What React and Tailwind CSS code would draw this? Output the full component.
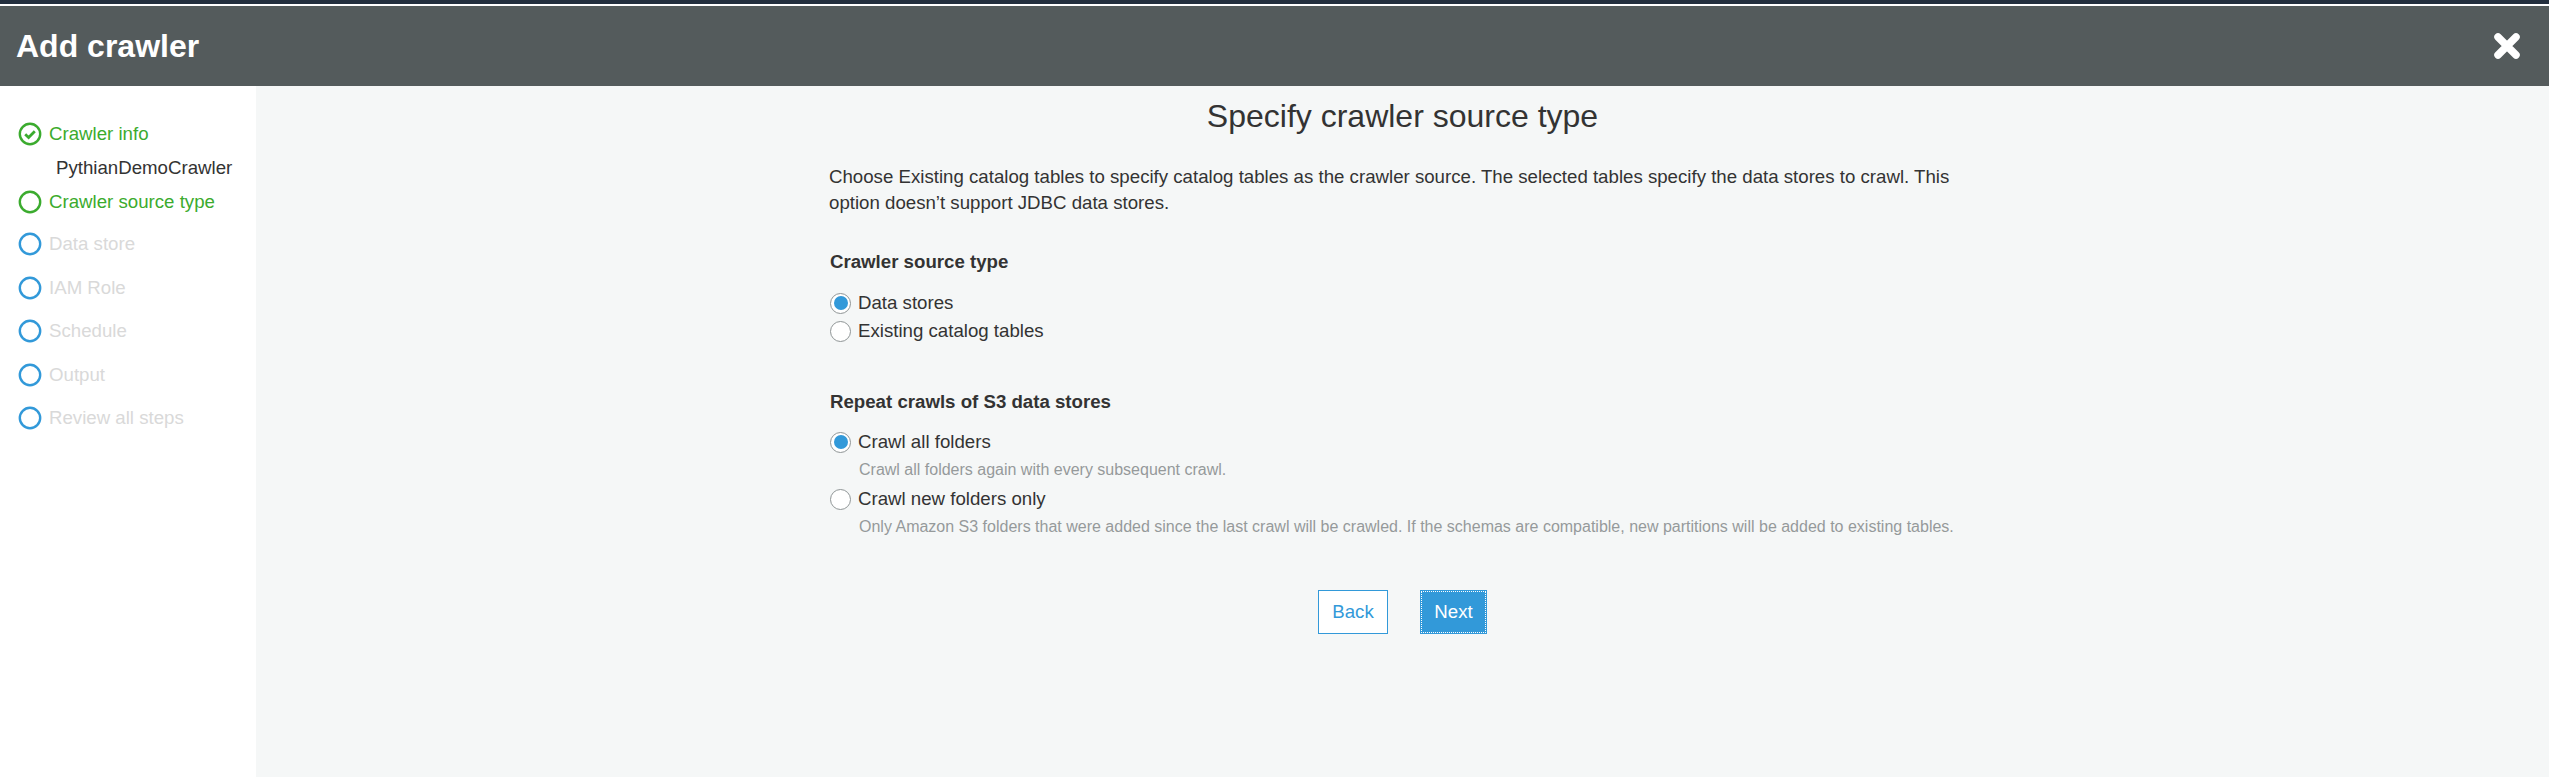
const steps = [
  { label: 'Data store' },
  { label: 'IAM Role' },
  { label: 'Schedule' },
  { label: 'Output' },
  { label: 'Review all steps' },
];

const Ring = ({ color }) => (
  <svg width="24" height="24" viewBox="0 0 24 24" className="shrink-0">
    <circle cx="12" cy="12" r="10.2" fill="none" stroke={color} strokeWidth="2.4" />
  </svg>
);

const CheckRing = () => (
  <svg width="24" height="24" viewBox="0 0 24 24" className="shrink-0">
    <circle cx="12" cy="12" r="10.2" fill="none" stroke="#3bab2e" strokeWidth="2.4" />
    <path d="M7.2 12.2l3.4 3.3 6.2-6.2" fill="none" stroke="#3bab2e" strokeWidth="2.8" />
  </svg>
);

const Radio = ({ checked }) => (
  <span className="w-[21px] h-[21px] rounded-full border border-[#8f9596] bg-white flex items-center justify-center shrink-0">
    {checked && <span className="w-[14px] h-[14px] rounded-full bg-[#3299d9]" />}
  </span>
);

const RadioRow = ({ checked, label, hint }) => (
  <div>
    <label className="flex items-center gap-[7px] h-[28px] text-[18.67px] text-[#333]">
      <Radio checked={checked} />
      {label}
    </label>
    {hint && <p className="ml-[29px] h-[29px] pt-[4px] text-[16px] leading-[20px] text-[#959a9b]">{hint}</p>}
  </div>
);

export default function App() {
  return (
    <div className="w-[2556px] h-[778px] bg-white overflow-hidden font-['Liberation_Sans',Arial,sans-serif]">
      <div className="h-[4px] w-[2549px] bg-[#232f3e]" />
      <div className="h-[2px]" />
      <div className="w-[2549px]">
        {/* Header */}
        <div className="h-[80px] bg-[#545b5c] flex items-center justify-between pl-[16px] pr-[29px]">
          <h1 className="text-[32px] font-bold text-white">Add crawler</h1>
          <svg width="26" height="26" viewBox="0 0 26 26">
            <path d="M4 4l18 18M22 4L4 22" stroke="#fff" strokeWidth="7.5" strokeLinecap="round" />
          </svg>
        </div>

        <div className="flex h-[691px]">
          {/* Sidebar */}
          <div className="w-[256px] shrink-0 bg-white pt-[36px] pl-[18px] text-[18.67px]">
            <div className="flex items-center gap-[7px] h-[24px] text-[#3bab2e]">
              <CheckRing />
              Crawler info
            </div>
            <div className="pl-[38px] mt-[9px] h-[25px] leading-[25px] text-[#333]">PythianDemoCrawler</div>
            <div className="flex items-center gap-[7px] h-[24px] mt-[10px] text-[#3bab2e]">
              <Ring color="#3bab2e" />
              Crawler source type
            </div>
            <div className="flex flex-col gap-[19.5px] mt-[18px] text-[#d9d9d9]">
              {steps.map((s) => (
                <div key={s.label} className="flex items-center gap-[7px] h-[24px]">
                  <Ring color="#3299d9" />
                  {s.label}
                </div>
              ))}
            </div>
          </div>

          {/* Main */}
          <div className="flex-1 bg-[#f5f7f7] flex flex-col items-center">
            <h2 className="mt-[10px] h-[40px] text-[32px] leading-[40px] text-[#333]">Specify crawler source type</h2>
            <div className="w-[1146px] mt-[28px] ml-[1px]">
              <p className="-ml-[1px] text-[18.67px] leading-[26px] text-[#333]">
                Choose Existing catalog tables to specify catalog tables as the crawler source. The selected tables specify the data stores to crawl. This option doesn’t support JDBC data stores.
              </p>
              <h3 className="mt-[34px] text-[18.67px] leading-[24px] font-bold text-[#333]">Crawler source type</h3>
              <div className="mt-[15px]">
                <RadioRow checked label="Data stores" />
                <RadioRow label="Existing catalog tables" />
              </div>
              <h3 className="mt-[45px] text-[18.67px] leading-[24px] font-bold text-[#333]">Repeat crawls of S3 data stores</h3>
              <div className="mt-[14px]">
                <RadioRow checked label="Crawl all folders" hint="Crawl all folders again with every subsequent crawl." />
                <RadioRow
                  label="Crawl new folders only"
                  hint="Only Amazon S3 folders that were added since the last crawl will be crawled. If the schemas are compatible, new partitions will be added to existing tables."
                />
              </div>
            </div>
            <div className="flex gap-[32px] mt-[48px]">
              <button className="w-[70px] h-[44px] bg-white border border-[#3299d9] text-[18.67px] text-[#3299d9]">Back</button>
              <button className="w-[67px] h-[44px] bg-[#3299d9] text-[18.67px] text-white outline-1 outline-dotted outline-white -outline-offset-2">Next</button>
            </div>
          </div>
        </div>
      </div>
    </div>
  );
}
